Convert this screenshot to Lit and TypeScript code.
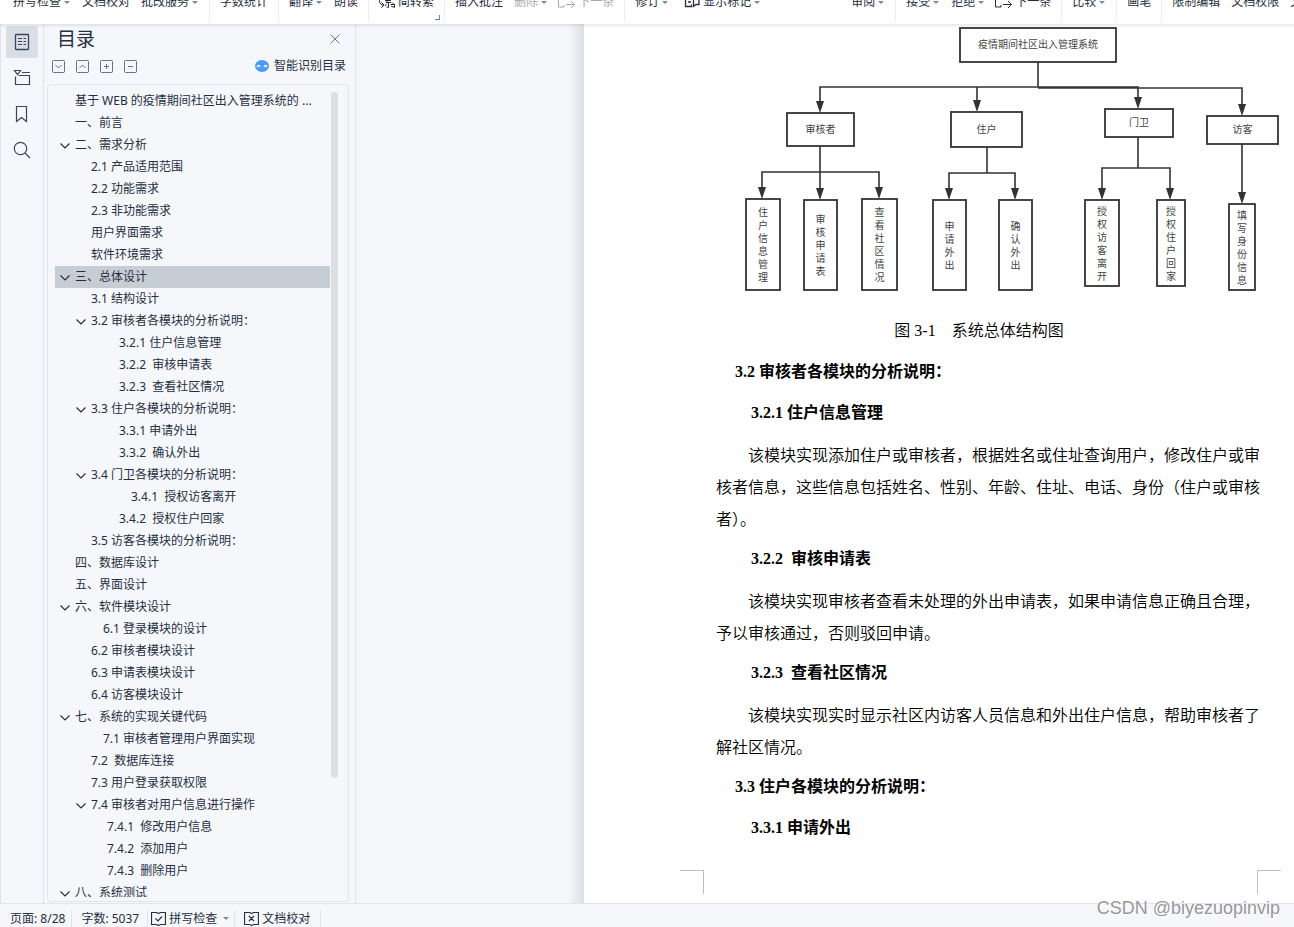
import { LitElement, html, css, svg, nothing } from "lit";
import { customElement, state } from "lit/decorators.js";
import { classMap } from "lit/directives/class-map.js";

type Glyph = "convert" | "next" | "markup";
interface Tool { label: string; caret?: boolean; icon?: Glyph; off?: boolean }
interface Group { tools: Tool[]; open?: boolean; late?: boolean; launcher?: boolean }

const GROUPS: Group[] = [
  { tools: [{ label: "拼写检查", caret: true }, { label: "文档校对" }, { label: "批改服务", caret: true }] },
  { tools: [{ label: "字数统计" }] },
  { tools: [{ label: "翻译", caret: true }, { label: "朗读" }] },
  { tools: [{ label: "简转繁", icon: "convert" }], launcher: true },
  { tools: [{ label: "插入批注" }, { label: "删除", caret: true, off: true }, { label: "下一条", icon: "next", off: true }] },
  { tools: [{ label: "修订", caret: true }, { label: "显示标记", icon: "markup", caret: true }], open: true },
  { tools: [{ label: "审阅", caret: true }], late: true },
  { tools: [{ label: "接受", caret: true }, { label: "拒绝", caret: true }, { label: "下一条", icon: "next" }] },
  { tools: [{ label: "比较", caret: true }] },
  { tools: [{ label: "画笔" }] },
  { tools: [{ label: "限制编辑" }, { label: "文档权限" }, { label: "文档认证" }], open: true },
];

interface Entry { text: string; level: number; pad?: number; open?: boolean }
const ENTRIES: Entry[] = [
  { text: "基于 WEB 的疫情期间社区出入管理系统的 ...", level: 1 },
  { text: "一、前言", level: 1 },
  { text: "二、需求分析", level: 1, open: true },
  { text: "2.1 产品适用范围", level: 2 },
  { text: "2.2 功能需求", level: 2 },
  { text: "2.3 非功能需求", level: 2 },
  { text: "用户界面需求", level: 2 },
  { text: "软件环境需求", level: 2 },
  { text: "三、总体设计", level: 1, open: true },
  { text: "3.1 结构设计", level: 2 },
  { text: "3.2 审核者各模块的分析说明：", level: 2, open: true },
  { text: "3.2.1 住户信息管理", level: 3, pad: 1 },
  { text: "3.2.2  审核申请表", level: 3, pad: 1 },
  { text: "3.2.3  查看社区情况", level: 3, pad: 1 },
  { text: "3.3 住户各模块的分析说明：", level: 2, open: true },
  { text: "3.3.1 申请外出", level: 3, pad: 1 },
  { text: "3.3.2  确认外出", level: 3, pad: 1 },
  { text: "3.4 门卫各模块的分析说明：", level: 2, open: true },
  { text: "3.4.1  授权访客离开", level: 3, pad: 2 },
  { text: "3.4.2  授权住户回家", level: 3, pad: 1 },
  { text: "3.5 访客各模块的分析说明：", level: 2 },
  { text: "四、数据库设计", level: 1 },
  { text: "五、界面设计", level: 1 },
  { text: "六、软件模块设计", level: 1, open: true },
  { text: "6.1 登录模块的设计", level: 2, pad: 1 },
  { text: "6.2 审核者模块设计", level: 2 },
  { text: "6.3 申请表模块设计", level: 2 },
  { text: "6.4 访客模块设计", level: 2 },
  { text: "七、系统的实现关键代码", level: 1, open: true },
  { text: "7.1 审核者管理用户界面实现", level: 2, pad: 1 },
  { text: "7.2  数据库连接", level: 2 },
  { text: "7.3 用户登录获取权限", level: 2 },
  { text: "7.4 审核者对用户信息进行操作", level: 2, open: true },
  { text: "7.4.1  修改用户信息", level: 3 },
  { text: "7.4.2  添加用户", level: 3 },
  { text: "7.4.3  删除用户", level: 3 },
  { text: "八、系统测试", level: 1, open: true },
];

interface Box { x: number; y: number; w: number; h: number; text: string }

/* Boxes of the structure chart, in the chart's own coordinates. */
const WIDE: Box[] = [
  { x: 376, y: 4, w: 156, h: 34, text: "疫情期间社区出入管理系统" },
  { x: 203, y: 89, w: 67, h: 33, text: "审核者" },
  { x: 367, y: 88, w: 71, h: 35, text: "住户" },
  { x: 521, y: 85, w: 68, h: 28, text: "门卫" },
  { x: 623, y: 92, w: 71, h: 28, text: "访客" },
];
const TALL: Box[] = [
  { x: 162, y: 175, w: 34, h: 91, text: "住户信息管理" },
  { x: 220, y: 176, w: 33, h: 90, text: "审核申请表" },
  { x: 278, y: 175, w: 35, h: 91, text: "查看社区情况" },
  { x: 349, y: 176, w: 33, h: 90, text: "申请外出" },
  { x: 415, y: 176, w: 33, h: 90, text: "确认外出" },
  { x: 501, y: 176, w: 34, h: 86, text: "授权访客离开" },
  { x: 573, y: 176, w: 28, h: 86, text: "授权住户回家" },
  { x: 645, y: 180, w: 26, h: 86, text: "填写身份信息" },
];
const ARROWS: [number, number][] = [
  [236, 88], [393, 87], [554, 84], [658, 91],
  [178, 174], [236, 175], [295, 174], [365, 175], [431, 175], [518, 175], [586, 175], [658, 179],
];

@customElement("structure-chart")
class StructureChart extends LitElement {
  static styles = css`
    :host { display: block; }
    svg { display: block; width: 100%; height: 280px; overflow: visible; }
    .line { fill: none; stroke: #333; stroke-width: 1.6; }
    .box { fill: #fff; stroke: #333; stroke-width: 1.8; }
    .head { fill: #333; }
    .label {
      font: 400 10px "Noto Sans CJK SC", sans-serif;
      fill: #444; text-anchor: middle;
    }
  `;
  render() {
    return html`<svg viewBox="0 0 710 280" preserveAspectRatio="xMinYMin meet" role="img" aria-label="系统总体结构图">
      <path class="line" d="M454 38V63M236 80V63H554V76M454 64H658V84M393 63V80
        M236 122V168M178 168V148H295V168M403 123V149M365 168V149H431V168
        M554 113V144M518 168V144H586V168M658 120V172" />
      ${ARROWS.map(([x, y]) => svg`<path class="head" d="M${x - 4} ${y - 11}h8l-4 12z" />`)}
      ${WIDE.map((b) => svg`<rect class="box" x=${b.x} y=${b.y} width=${b.w} height=${b.h} />
        <text class="label" x=${b.x + b.w / 2} y=${Math.round(b.y + b.h / 2) + 3}>${b.text}</text>`)}
      ${TALL.map((b) => {
        const chars = [...b.text];
        const first = Math.round(b.y + b.h / 2 - (chars.length - 1) * 6.5) + 4;
        return svg`<rect class="box" x=${b.x} y=${b.y} width=${b.w} height=${b.h} />
          <text class="label">${chars.map((c, i) => svg`<tspan x=${b.x + b.w / 2} y=${first + i * 13}>${c}</tspan>`)}</text>`;
      })}
    </svg>`;
  }
}

@customElement("app-root")
class AppRoot extends LitElement {
  @state() private current = 8;

  static styles = css`
    :host {
      display: flex; flex-direction: column; height: 100vh; overflow: hidden;
      position: relative;
      background: #f5f7fa; color: #262f42;
      font: 12px/20px "Noto Sans", "Noto Sans CJK SC", sans-serif;
    }
    *, *::before, *::after { box-sizing: border-box; }
    button {
      border: 0; padding: 0; margin: 0; background: none; color: inherit;
      font: inherit; white-space: nowrap; cursor: pointer;
      display: inline-flex; align-items: center; justify-content: center;
    }
    svg { display: block; flex: none; fill: none; stroke: currentColor; }
    .ribbon {
      flex: none; height: 24px; overflow: hidden; display: flex; background: #fff;
      padding-left: 3px; position: relative; z-index: 1;
    }
    .group {
      flex: none; display: flex; align-items: flex-start; gap: 11px;
      padding: 0 10px; height: 22px; border-right: 1px solid #eceef1; position: relative;
    }
    .group.open { border-right: 0; }
    .group.late { padding-left: 80px; }
    .tool { margin-top: -8px; height: 20px; }
    .tool.off { color: #a5a8ae; }
    .tool svg { margin-right: 3px; overflow: visible; }
    .caret {
      margin: 0 1px 0 3px; border: solid transparent; border-width: 3px 3px 0;
      border-top-color: #7f8798; width: 6px;
    }
    .launcher {
      position: absolute; right: 4px; bottom: 2px; width: 5px; height: 5px;
      border: solid #7b8496; border-width: 0 1px 1px 0;
    }
    .work { flex: 1; min-height: 0; display: flex; border-bottom: 1px solid #e1e4ea; }
    .rail {
      flex: none; width: 44px; padding: 2px 5px; border: solid #e1e4ea; border-width: 0 1px;
      display: flex; flex-direction: column; gap: 4px; color: #3a4560;
    }
    .rail button { width: 32px; height: 32px; border-radius: 2px; }
    .rail .on { background: #d9dde4; }
    .panel {
      flex: none; width: 312px; border-right: 1px solid #e1e4ea;
      display: flex; flex-direction: column; padding: 0 6px 1px 3px;
    }
    .top { display: flex; justify-content: space-between; align-items: center; height: 30px; padding: 0 8px 0 10px; }
    .top h1 { margin: 0; font-size: 19px; line-height: 30px; font-weight: 400; }
    .top button { color: #727a8c; }
    .actions { display: flex; align-items: center; gap: 11px; height: 24px; margin-bottom: 6px; padding: 0 3px 0 5px; }
    .actions .mini { color: #6d717a; }
    .smart { margin-left: auto; gap: 5px; }
    .frame {
      flex: 1; min-height: 0; display: flex; border: 1px solid #e1e4ea; border-radius: 4px;
      padding: 5px 10px 4px 7px;
    }
    .toc { flex: 1; min-width: 0; margin: 0; padding: 0; list-style: none; overflow: hidden; }
    .row { display: flex; align-items: center; height: 22px; padding-left: 4px; }
    .row.on { background: #c7cdd5; }
    .row a { color: inherit; text-decoration: none; white-space: pre; line-height: 24px; }
    .twist { flex: none; width: 12px; height: 22px; margin-right: 4px; }
    .lv2 { padding-left: 20px; }
    .lv3 { padding-left: 36px; }
    .pad1 a { padding-left: 12px; }
    .pad2 a { padding-left: 24px; }
    .bar { flex: none; width: 7px; height: 85%; margin: 2px 0 0 1px; border-radius: 4px; background: #dcdfe2; }
    .desk { flex: 1; min-width: 0; display: flex; padding-left: 212px; }
    .edge { flex: none; width: 16px; background: linear-gradient(90deg, #f5f7fa, #dddfe2); }
    .page {
      flex: 1; min-width: 0; overflow: hidden; background: #fff; color: #000;
      display: flex; flex-direction: column;
      font: 350 16px/32px "Liberation Serif", "Noto Sans CJK SC", serif;
    }
    .text { padding: 0 34px 0 132px; display: flex; flex-direction: column; gap: 9px; margin-top: 11px; }
    .text > * { margin: 0; font-size: 16px; }
    .cap { text-align: center; white-space: pre; padding-right: 18px; }
    .text h2, .text h3 { font-weight: 700; white-space: pre; }
    .text h2 { padding-left: 19px; }
    .text h3 { padding-left: 35px; }
    .text p { text-indent: 32px; font-family: "Noto Sans CJK SC", sans-serif; }
    .marks { margin-top: auto; display: flex; justify-content: space-between; padding: 0 13px 9px 96px; }
    .mark { width: 24px; height: 24px; border: solid #bfbfbf; border-width: 1px 1px 0 0; }
    .mark.right { border-width: 1px 0 0 1px; }
    .status { flex: none; height: 23px; display: flex; align-items: center; padding-top: 6px; }
    .cell { height: 18px; border-right: 1px solid #dfe2e8; display: flex; align-items: center; }
    .cell button { gap: 3px; }
    .pages { padding: 0 6px 0 10px; }
    .words { padding: 0 8px 0 9px; }
    .spell { padding: 0 4px 0 3px; }
    .proof { padding: 0 10px 0 9px; }
    .shade {
      position: absolute; left: 0; right: 0; top: 24px; height: 4px;
      background: linear-gradient(rgba(0,0,0,.09), rgba(0,0,0,0)); pointer-events: none;
    }
    .mark-text {
      position: absolute; right: 14px; bottom: 7px; font: 18px/24px "Liberation Sans", sans-serif;
      color: #96989b; text-shadow: 1px 1px 0 #fff; pointer-events: none;
    }
  `;

  private glyph(kind: Glyph) {
    if (kind === "convert")
      return html`<svg width="16" height="20"><path d="M1 6Q-1 12 4 13M2.500 10.500l2.500 2.500-2.500 2.500M6 8.500h6M11 6.500l-4 4h5M9.500 10.500v5l-2-.5M7.500 12l-1.500 2M11.500 12.500h3.500l-2-2M12 14l3.500 1.500V12" /></svg>`;
    if (kind === "next")
      return html`<svg width="16" height="20"><path d="M4.500 5.500H-.5v9.500h5.500v-2M7 12.500h8M12 9l3.500 3.500-3.500 3.500" /></svg>`;
    return html`<svg width="20" height="20"><path d="M11 5H5.500v9.500h6v-2M8 10h3M13.500 5h5.500v7.500h-3l-2.500 2z" stroke-width="1.300" /></svg>`;
  }

  private mini(name: string, d: string) {
    return html`<button class="mini" aria-label=${name}>
      <svg width="13" height="13"><rect x=".5" y=".5" width="12" height="12" rx="1" /><path d=${d} /></svg>
    </button>`;
  }

  private row(e: Entry, i: number) {
    const cls = { row: true, on: i === this.current, [`lv${e.level}`]: true, [`pad${e.pad ?? 0}`]: true };
    return html`<li class=${classMap(cls)}>
      ${e.open
        ? html`<button class="twist" aria-label="折叠"><svg width="12" height="12"><path d="M1.500 4.500l4.500 4.500 4.500-4.500" stroke-width="1.200" /></svg></button>`
        : html`<span class="twist"></span>`}
      <a href="#s${i}" @click=${(ev: Event) => { ev.preventDefault(); this.current = i; }}>${e.text}</a>
    </li>`;
  }

  render() {
    return html`
      <div class="ribbon" role="toolbar">
        ${GROUPS.map((g) => html`<div class=${classMap({ group: true, open: !!g.open, late: !!g.late })}>
          ${g.tools.map((t) => html`<button class=${classMap({ tool: true, off: !!t.off })}>
            ${t.icon ? this.glyph(t.icon) : nothing}${t.label}${t.caret ? html`<span class="caret"></span>` : nothing}
          </button>`)}
          ${g.launcher ? html`<span class="launcher"></span>` : nothing}
        </div>`)}
      </div>
      <div class="work">
        <nav class="rail">
          <button class="on" aria-label="目录"><svg width="24" height="24"><rect x="5.500" y="4.500" width="13" height="15" rx=".5" stroke-width="1.300" /><path d="M8 8.500h4M13.500 8.500h2.500M8 11.500h4M13.500 11.500h2.500M8 14.500h4M13.500 14.500h2.500" /></svg></button>
          <button aria-label="章节"><svg width="24" height="24"><path d="M4.500 4.500h6l-3 4zM12 6.500h8M5.500 10.500v8h14v-9H8.500" stroke-width="1.200" /></svg></button>
          <button aria-label="书签"><svg width="24" height="24"><path d="M6.500 4.500h10v15l-5-4-5 4z" stroke-width="1.200" /></svg></button>
          <button aria-label="查找"><svg width="24" height="24"><circle cx="10.500" cy="10.500" r="6.200" stroke-width="1.200" /><path d="M15 15l5 5" stroke-width="1.300" /></svg></button>
        </nav>
        <section class="panel">
          <header class="top">
            <h1>目录</h1>
            <button aria-label="关闭"><svg width="12" height="12"><path d="M1.500 1.500l9 9M10.500 1.500l-9 9" /></svg></button>
          </header>
          <div class="actions">
            ${this.mini("展开", "M3.500 5l3 3 3-3")}
            ${this.mini("收起", "M3.500 8l3-3 3 3")}
            ${this.mini("增加", "M4 6.500h5M6.500 4v5")}
            ${this.mini("减少", "M4 6.500h5")}
            <button class="smart">
              <svg width="14" height="12"><ellipse cx="7" cy="6" rx="7" ry="6" fill="#4c9af3" stroke="none" /><path d="M2 7q1.500-3 3 0M9 7q1.500-3 3 0" stroke="#fff" stroke-width="1.300" /></svg>
              智能识别目录
            </button>
          </div>
          <div class="frame">
            <ul class="toc">${ENTRIES.map((e, i) => this.row(e, i))}</ul>
            <div class="bar"></div>
          </div>
        </section>
        <main class="desk">
          <div class="edge"></div>
          <article class="page">
            <structure-chart></structure-chart>
            <div class="text">
              <div class="cap">图 3-1    系统总体结构图</div>
              <h2>3.2 审核者各模块的分析说明：</h2>
              <h3>3.2.1 住户信息管理</h3>
              <p>该模块实现添加住户或审核者，根据姓名或住址查询用户，修改住户或审核者信息，这些信息包括姓名、性别、年龄、住址、电话、身份（住户或审核者）。</p>
              <h3>3.2.2  审核申请表</h3>
              <p>该模块实现审核者查看未处理的外出申请表，如果申请信息正确且合理，予以审核通过，否则驳回申请。</p>
              <h3>3.2.3  查看社区情况</h3>
              <p>该模块实现实时显示社区内访客人员信息和外出住户信息，帮助审核者了解社区情况。</p>
              <h2>3.3 住户各模块的分析说明：</h2>
              <h3>3.3.1 申请外出</h3>
            </div>
            <div class="marks"><span class="mark"></span><span class="mark right"></span></div>
          </article>
        </main>
      </div>
      <footer class="status">
        <div class="cell pages">页面: 8/28</div>
        <div class="cell words">字数: 5037</div>
        <div class="cell spell"><button><svg width="15" height="15"><path d="M5.500 1.500h-5v12h5l2 1 2-1h5v-12h-5l-2 1zM4.500 7.500l2.500 2.500 4-4.500" stroke-width="1.200" /></svg>拼写检查<span class="caret"></span></button></div>
        <div class="cell proof"><button><svg width="15" height="15"><path d="M5.500 1.500h-5v12h5l2 1 2-1h5v-12h-5l-2 1zM5 5l5 5M10 5l-5 5" stroke-width="1.200" /></svg>文档校对</button></div>
      </footer>
      <div class="shade"></div>
      <div class="mark-text">CSDN @biyezuopinvip</div>
    `;
  }
}
